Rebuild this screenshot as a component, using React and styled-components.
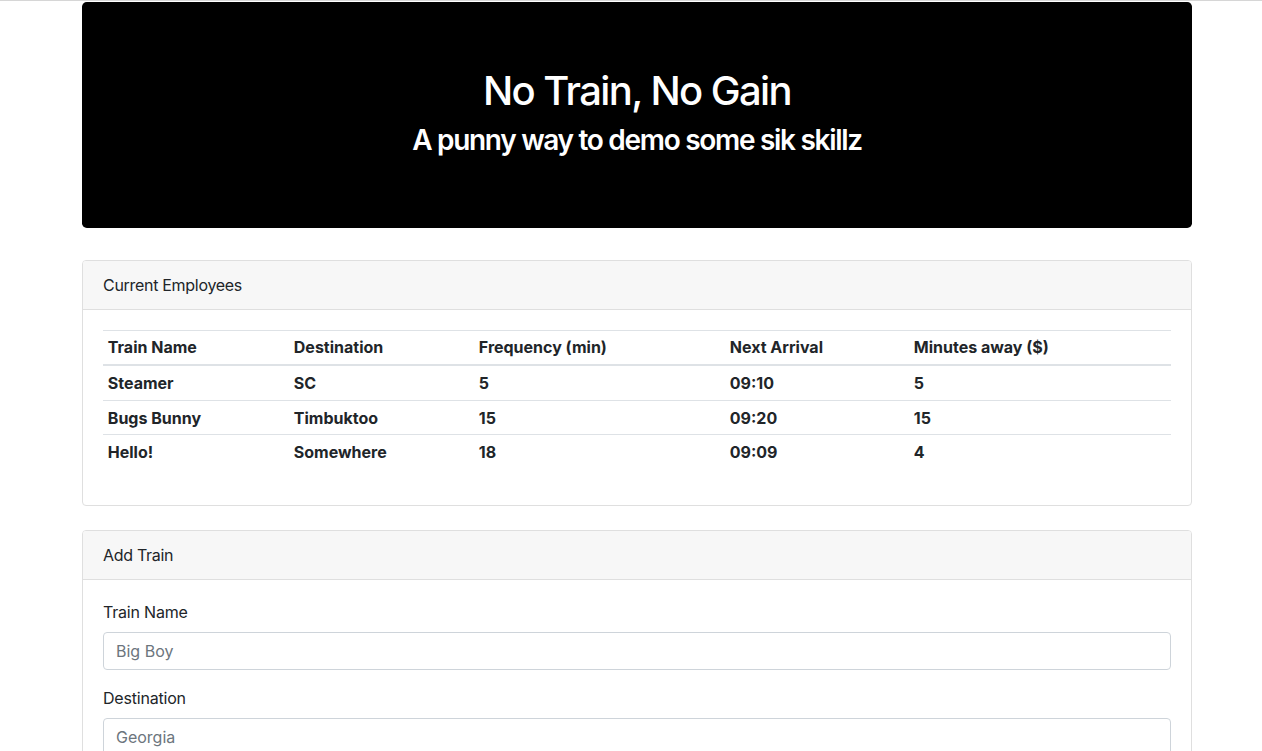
import React from "react";
import styled, { createGlobalStyle } from "styled-components";

const Global = createGlobalStyle`
  html, body { margin: 0; padding: 0; background: #fff; }
  body {
    font-family: Inter, "Noto Sans", "Liberation Sans", sans-serif;
    font-size: 16px;
    line-height: 1.5;
    color: #212529;
    border-top: 1px solid #d6d6d6;
  }
  * { box-sizing: border-box; }
`;

const Container = styled.div`
  width: 1110px;
  margin: 1px 0 0 82px;
`;

const Jumbotron = styled.header`
  background: #000;
  color: #fff;
  border-radius: 4.8px;
  padding: 65px 32px 62px;
  margin-bottom: 32px;
  text-align: center;
`;

const Title = styled.h1`
  margin: 0 0 9px;
  font-size: 40px;
  font-weight: 500;
  line-height: 1.2;
  letter-spacing: -1.6px;
`;

const Subtitle = styled.h3`
  margin: 0 0 8px;
  font-size: 28px;
  font-weight: 600;
  line-height: 1.2;
  letter-spacing: -1.3px;
`;

const Card = styled.section`
  border: 1px solid #dfdfdf;
  border-radius: 4px;
  margin-bottom: 24px;
  overflow: hidden;
`;

const CardHeader = styled.div`
  background: #f7f7f7;
  border-bottom: 1px solid #dfdfdf;
  padding: 12px 20px;
  font-size: 16px;
  line-height: 24px;
  letter-spacing: -0.3px;
`;

const CardBody = styled.div`
  padding: 20px;
`;

const Table = styled.table`
  width: 100%;
  border-collapse: collapse;
  margin-bottom: 16px;
  table-layout: fixed;
`;

const Cell = styled.td`
  padding: 4.8px;
  border-top: 1px solid #dee2e6;
  text-align: left;
  font-weight: 700;
  font-size: 16px;
  line-height: 24px;
  vertical-align: top;
`;

const HeadCell = styled(Cell).attrs({ as: "th" })`
  border-bottom: 2px solid #dee2e6;
`;

const FormGroup = styled.div`
  margin-bottom: 16px;
`;

const Label = styled.label`
  display: block;
  margin-bottom: 8px;
  font-size: 16px;
  line-height: 24px;
  letter-spacing: -0.2px;
`;

const Input = styled.input`
  display: block;
  width: 100%;
  height: 38px;
  padding: 6px 12px;
  font-family: inherit;
  font-size: 16px;
  line-height: 24px;
  color: #495057;
  background: #fff;
  border: 1px solid #ced4da;
  border-radius: 4px;
  &::placeholder { color: #6c757d; opacity: 1; }
`;

const widths = [186, 185, 251, 184, 262];
const heads = ["Train Name", "Destination", "Frequency (min)", "Next Arrival", "Minutes away ($)"];
const rows = [
  ["Steamer", "SC", "5", "09:10", "5"],
  ["Bugs Bunny", "Timbuktoo", "15", "09:20", "15"],
  ["Hello!", "Somewhere", "18", "09:09", "4"],
];

export default function App() {
  return (
    <>
      <Global />
      <Container>
        <Jumbotron>
          <Title>No Train, No Gain</Title>
          <Subtitle>A punny way to demo some sik skillz</Subtitle>
        </Jumbotron>

        <Card>
          <CardHeader>Current Employees</CardHeader>
          <CardBody>
            <Table>
              <colgroup>
                {widths.map((w, i) => (
                  <col key={i} style={{ width: w }} />
                ))}
              </colgroup>
              <thead>
                <tr>
                  {heads.map((h) => (
                    <HeadCell key={h}>{h}</HeadCell>
                  ))}
                </tr>
              </thead>
              <tbody>
                {rows.map((r, i) => (
                  <tr key={i}>
                    {r.map((c, j) => (
                      <Cell key={j}>{c}</Cell>
                    ))}
                  </tr>
                ))}
              </tbody>
            </Table>
          </CardBody>
        </Card>

        <Card>
          <CardHeader>Add Train</CardHeader>
          <CardBody>
            <FormGroup>
              <Label>Train Name</Label>
              <Input placeholder="Big Boy" />
            </FormGroup>
            <FormGroup>
              <Label>Destination</Label>
              <Input placeholder="Georgia" />
            </FormGroup>
            <FormGroup>
              <Label>First Train Time (HH:mm - military time)</Label>
              <Input placeholder="03:30" />
            </FormGroup>
            <FormGroup>
              <Label>Frequency (min)</Label>
              <Input placeholder="15" />
            </FormGroup>
          </CardBody>
        </Card>
      </Container>
    </>
  );
}
